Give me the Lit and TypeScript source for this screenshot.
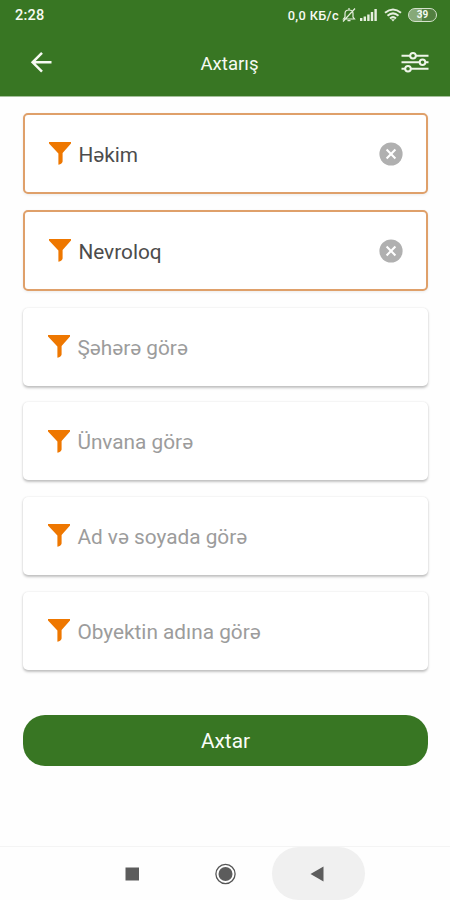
import { LitElement, html, css } from "lit";
import { customElement, property } from "lit/decorators.js";

@customElement("filter-field")
class FilterField extends LitElement {
  @property() label = "";
  @property({ type: Boolean, reflect: true }) selected = false;

  static styles = css`
    :host {
      box-sizing: border-box;
      display: flex;
      align-items: center;
      height: 78px;
      margin-bottom: 16.7px;
      padding: 0 26px 0 25px;
      border-radius: 5px;
      background: #fff;
      color: #9c9c9c;
      box-shadow: 0 1.5px 2.5px rgba(0, 0, 0, 0.24), 0 0 2px rgba(0, 0, 0, 0.05);
    }
    :host([selected]) {
      height: 81px;
      margin-bottom: 16.3px;
      padding: 0 23px 0 24px;
      border: 2px solid #dfa06a;
      color: #4c4c4c;
      box-shadow: 0 1px 3px rgba(0, 0, 0, 0.08);
    }
    .funnel {
      width: 22px;
      height: 23px;
      flex: none;
      margin-right: 7.4px;
    }
    .label {
      flex: 1;
      font-size: 20.8px;
      line-height: 24px;
      white-space: nowrap;
      margin-top: 2px;
    }
    .clear {
      width: 24px;
      height: 24px;
    }
  `;

  render() {
    return html`
      <svg class="funnel" viewBox="0 0 22 23">
        <path d="M0 0H22V1.6L13.6 11V19.5Q13.3 21.8 9.4 22.8V11.6L0 1.6Z" fill="#ee7700" />
      </svg>
      <span class="label">${this.label}</span>
      ${this.selected
        ? html`<svg class="clear" viewBox="0 0 24 24">
            <circle cx="12" cy="12" r="11.6" fill="#b0b0b0" />
            <path d="M7.6 7.6L16.4 16.4M16.4 7.6L7.6 16.4" stroke="#fff" stroke-width="2.1" />
          </svg>`
        : ""}
    `;
  }
}

@customElement("app-root")
class AppRoot extends LitElement {
  static styles = css`
    :host {
      display: flex;
      flex-direction: column;
      width: 450px;
      height: 900px;
      overflow: hidden;
      background: #fefefe;
      font-family: Roboto, sans-serif;
    }
    .top {
      height: 96px;
      flex: none;
      background: #387623;
      color: #f6faf2;
      border-bottom: 1px solid #a5c09b;
    }
    .status {
      display: flex;
      align-items: center;
      height: 30px;
      padding: 0 13px 0 15px;
    }
    .time {
      flex: 1;
      font-size: 14.5px;
      font-weight: 500;
      letter-spacing: 0.2px;
    }
    .rate {
      font-size: 12.8px;
      font-weight: 500;
      letter-spacing: 0.35px;
      margin-right: 2.5px;
    }
    .bell { width: 14px; height: 16px; margin-right: 4.5px; }
    .signal { width: 17px; height: 14px; margin-right: 6.5px; }
    .wifi { width: 18px; height: 14px; margin-right: 6.5px; }
    .battery {
      box-sizing: border-box;
      width: 29px;
      height: 14px;
      border: 1.5px solid #d4e2cb;
      border-radius: 7px;
      background: linear-gradient(90deg, #86a978 0 48%, #527f40 48%);
      font-size: 10px;
      font-weight: 700;
      line-height: 12px;
      text-align: center;
    }
    .bar {
      display: grid;
      grid-template-columns: 30px 1fr 30px;
      align-items: center;
      height: 64px;
      padding: 0 19px 0 26px;
    }
    .back { width: 30px; height: 30px; }
    .tune { width: 28px; height: 24px; }
    .title {
      font-size: 18.6px;
      text-align: center;
      padding: 4px 0 0 2px;
    }
    .form {
      flex: 1;
      padding: 16px 22px 0 23px;
    }
    .submit {
      display: block;
      width: 405px;
      height: 51px;
      margin-top: 45px;
      border: 0;
      border-radius: 22px;
      background: #387623;
      color: #fafdf8;
      font: 20.8px Roboto, sans-serif;
      padding: 2px 0 0;
    }
    .nav {
      display: flex;
      align-items: center;
      justify-content: center;
      height: 53px;
      border-top: 1px solid #f4f4f4;
      flex: none;
    }
    .key {
      width: 93px;
      height: 53px;
      display: flex;
      align-items: center;
      justify-content: center;
      border-radius: 27px;
    }
    .pressed { background: #f0f0f0; }
    .key svg { width: 24px; height: 24px; }
  `;

  render() {
    return html`
      <header class="top">
        <div class="status">
          <span class="time">2:28</span>
          <span class="rate">0,0 КБ/с</span>
          <svg class="bell" viewBox="0 0 14 16" fill="none" stroke="#e6efdf" stroke-width="1.2">
            <path d="M1.5 12H12.5L11 10V6.5Q11 3 7 3Q3 3 3 6.5V10ZM5.5 13.7H8.5M7 1V3M13 1.5L1 14.5" />
          </svg>
          <svg class="signal" viewBox="0 0 17 14" fill="#e6efdf">
            <rect x="0" y="10" width="2.4" height="3" />
            <rect x="3.6" y="8.5" width="2.4" height="4.5" />
            <rect x="7.2" y="6.5" width="2.4" height="6.5" />
            <rect x="10.8" y="4" width="2.4" height="9" />
            <rect x="14.4" y="1" width="2.4" height="12" />
          </svg>
          <svg class="wifi" viewBox="0 0 18 14" fill="none" stroke="#e6efdf" stroke-width="2">
            <path d="M1 4.8Q9 -1.8 17 4.8M3.5 7.7Q9 3 14.5 7.7M6 10.4Q9 7.8 12 10.4" />
            <path d="M7 11.2H11L9 13.6Z" fill="#e6efdf" stroke="none" />
          </svg>
          <span class="battery">39</span>
        </div>
        <div class="bar">
          <svg class="back" viewBox="0 0 30 30" fill="none" stroke="#f6faf2" stroke-width="2.5">
            <path d="M25.5 15.3H7M16 5.9L6.6 15.3L16 24.7" />
          </svg>
          <span class="title">Axtarış</span>
          <svg class="tune" viewBox="0 0 28 24" fill="#387623" stroke="#eef5e9" stroke-width="2">
            <path d="M0.5 5.7H27.5M0.5 12.2H27.5M0.5 18.7H27.5" />
            <circle cx="12" cy="5.7" r="2.8" />
            <circle cx="21.5" cy="12.2" r="2.8" />
            <circle cx="7" cy="18.7" r="2.8" />
          </svg>
        </div>
      </header>
      <main class="form">
        <filter-field selected label="Həkim"></filter-field>
        <filter-field selected label="Nevroloq"></filter-field>
        <filter-field label="Şəhərə görə"></filter-field>
        <filter-field label="Ünvana görə"></filter-field>
        <filter-field label="Ad və soyada görə"></filter-field>
        <filter-field label="Obyektin adına görə"></filter-field>
        <button class="submit">Axtar</button>
      </main>
      <nav class="nav">
        <div class="key">
          <svg viewBox="0 0 24 24"><rect x="5.5" y="5.5" width="13.5" height="13" fill="#5c5c5c" /></svg>
        </div>
        <div class="key">
          <svg viewBox="0 0 24 24">
            <circle cx="12.5" cy="12" r="9.6" fill="none" stroke="#555" stroke-width="1.3" />
            <circle cx="12.5" cy="12" r="7" fill="#5c5c5c" />
          </svg>
        </div>
        <div class="key pressed">
          <svg viewBox="0 0 24 24"><path d="M4.5 12L17.5 4.5V19.5Z" fill="#5c5c5c" /></svg>
        </div>
      </nav>
    `;
  }
}
